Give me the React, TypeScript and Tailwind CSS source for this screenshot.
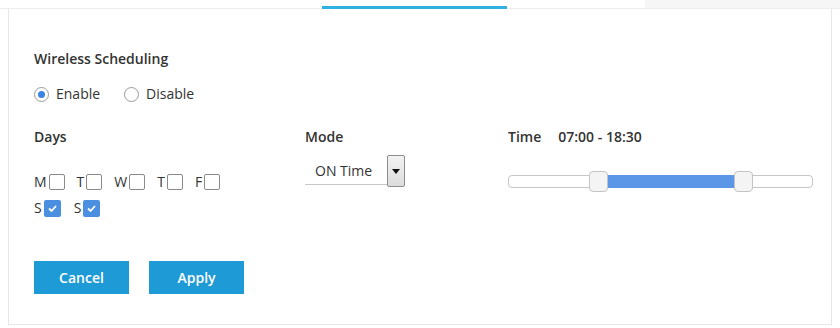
import React from "react";

const days = [
  { label: "M", checked: false },
  { label: "T", checked: false },
  { label: "W", checked: false },
  { label: "T", checked: false },
  { label: "F", checked: false },
];
const weekend = [
  { label: "S", checked: true },
  { label: "S", checked: true },
];

const Radio: React.FC<{ checked: boolean; label: string }> = ({ checked, label }) => (
  <label className="flex items-center gap-[7px]">
    <span className="flex h-[15px] w-[15px] items-center justify-center rounded-full border border-[#9a9a9a] bg-white">
      {checked && <span className="h-[7px] w-[7px] rounded-full bg-[#3a82e4]" />}
    </span>
    <span>{label}</span>
  </label>
);

const DayBox: React.FC<{ label: string; checked: boolean }> = ({ label, checked }) => (
  <label className="flex items-center gap-[2px]">
    <span>{label}</span>
    {checked ? (
      <span className="flex h-[17px] w-[17px] items-center justify-center rounded-[2px] bg-[#4a8fe0]">
        <svg width="9" height="7" viewBox="0 0 9 7">
          <path d="M1 3.5 L3.5 6 L8 1" stroke="white" strokeWidth="1.8" fill="none" />
        </svg>
      </span>
    ) : (
      <span className="h-[16px] w-[16px] rounded-[2px] border border-[#8a8a8a] bg-white" />
    )}
  </label>
);

export default function App() {
  return (
    <div className="relative h-[328px] w-[840px] overflow-hidden bg-white text-[14px] text-[#333] [font-family:'Open_Sans',sans-serif]">
      {/* tab bar strip */}
      <div className="flex h-[9px]">
        <div className="w-[322px] border-b border-[#ececec]" />
        <div className="w-[185px] border-b-[3px] border-[#2fb2e2]" />
        <div className="w-[138px] border-b border-[#ececec]" />
        <div className="flex-1 border-b border-[#ececec] bg-[#f6f6f6]" />
      </div>

      <div className="mx-[8px] h-[316px] border-x border-b border-[#e6e6e6] px-[25px] pt-[40px]">
        <h2 className="font-semibold leading-[20px]">Wireless Scheduling</h2>

        <div className="mt-[15px] flex items-center gap-[24px] leading-[20px]">
          <Radio checked label="Enable" />
          <Radio checked={false} label="Disable" />
        </div>

        <div className="mt-[23px] flex">
          <div className="w-[271px] shrink-0">
            <div className="font-semibold leading-[20px]">Days</div>
            <div className="mt-[25px] flex gap-[12px] leading-[20px]">
              {days.map((d, i) => (
                <DayBox key={i} label={d.label} checked={d.checked} />
              ))}
            </div>
            <div className="mt-[6px] flex gap-[13px] leading-[20px]">
              {weekend.map((d, i) => (
                <DayBox key={i} label={d.label} checked={d.checked} />
              ))}
            </div>
          </div>

          <div className="w-[203px] shrink-0">
            <div className="font-semibold leading-[20px]">Mode</div>
            <div className="mt-[8px] flex items-start">
              <div className="mt-[6px] w-[82px] border-b border-[#c8c8c8] pb-[3px] pl-[10px] leading-[20px]">
                ON Time
              </div>
              <div className="flex h-[32px] w-[18px] items-center justify-center rounded-[2px] border border-[#8d8d8d] bg-gradient-to-b from-[#f3f3f3] to-[#dcdcdc]">
                <svg width="8" height="5" viewBox="0 0 8 5">
                  <path d="M0 0 H8 L4 5 Z" fill="#111" />
                </svg>
              </div>
            </div>
          </div>

          <div className="shrink-0">
            <div className="flex gap-[17px] font-semibold leading-[20px]">
              <span>Time</span>
              <span>07:00 - 18:30</span>
            </div>
            <div className="mt-[24px] flex h-[20px] w-[305px] items-center">
              <div className="relative h-[13px] w-full rounded-[4px] border border-[#c6c6c6] bg-white">
                <div className="absolute top-[-1px] bottom-[-1px] left-[95px] w-[135px] bg-[#5b97e6]" />
                <div className="absolute top-[-5px] left-[80px] h-[21px] w-[19px] rounded-[4px] border border-[#c4c4c4] bg-[#f4f4f4]" />
                <div className="absolute top-[-5px] left-[225px] h-[21px] w-[19px] rounded-[4px] border border-[#c4c4c4] bg-[#f4f4f4]" />
              </div>
            </div>
          </div>
        </div>

        <div className="mt-[43px] flex gap-[20px]">
          <button className="h-[33px] w-[95px] bg-[#1e9ad6] font-semibold text-white">Cancel</button>
          <button className="h-[33px] w-[95px] bg-[#1e9ad6] font-semibold text-white">Apply</button>
        </div>
      </div>
    </div>
  );
}
